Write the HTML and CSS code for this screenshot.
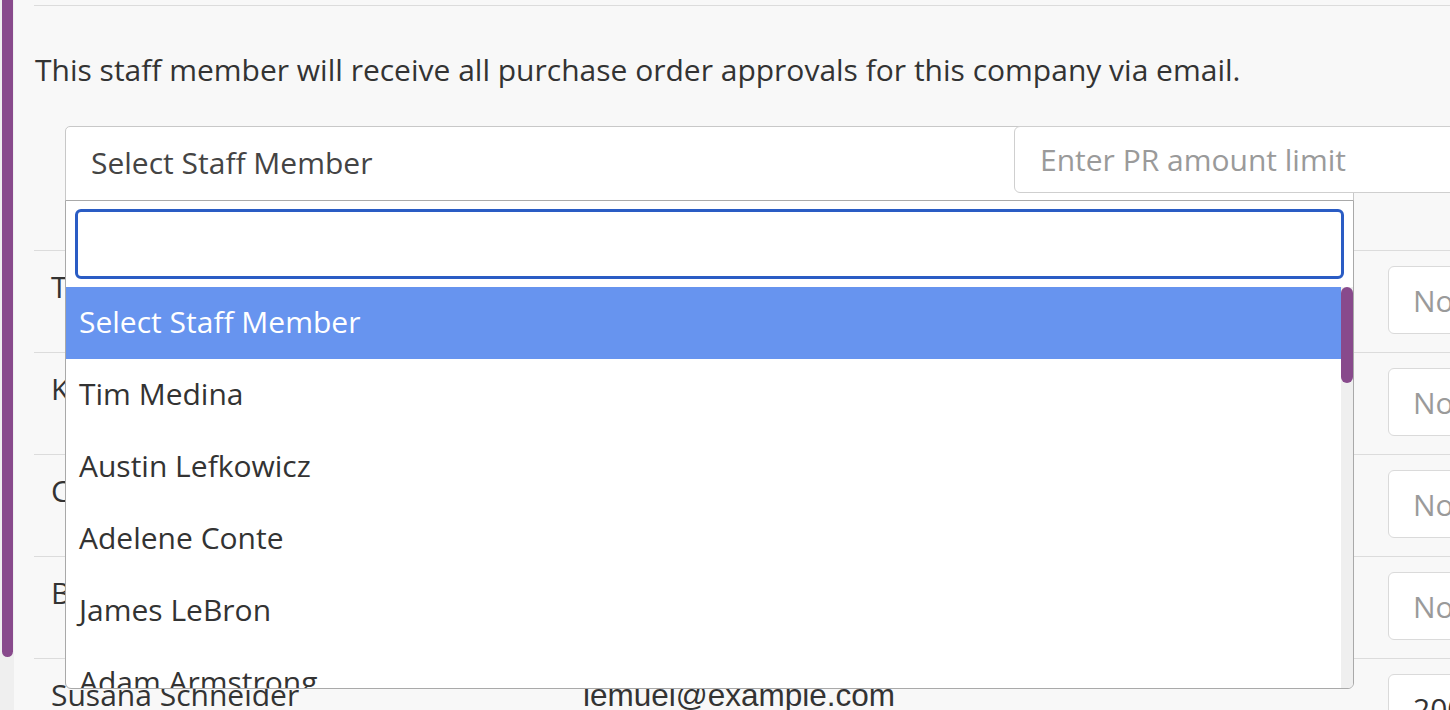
FILE: index.html
```html
<!DOCTYPE html>
<html lang="en">
<head>
<meta charset="utf-8">
<title>Purchase Order Approvals</title>
<link rel="stylesheet" href="styles.css">
</head>
<body>
<div class="page">
  <aside class="page-scroll"><div class="page-thumb"></div></aside>
  <main class="content">
    <hr class="rule">
    <p class="lead">This staff member will receive all purchase order approvals for this company via email.</p>

    <div class="form-row">
      <div class="select-wrap">
        <div class="select-box">Select Staff Member</div>
        <div class="dropdown">
          <div class="search-wrap"><input class="search" type="text" aria-label="Search staff"></div>
          <div class="results">
            <ul class="options">
              <li class="option active">Select Staff Member</li>
              <li class="option">Tim Medina</li>
              <li class="option">Austin Lefkowicz</li>
              <li class="option">Adelene Conte</li>
              <li class="option">James LeBron</li>
              <li class="option">Adam Armstrong</li>
            </ul>
            <div class="results-track"><div class="results-thumb"></div></div>
          </div>
        </div>
      </div>
      <input class="limit" type="text" placeholder="Enter PR amount limit">
    </div>

    <div class="table">
      <div class="row">
        <div class="cell name">Tim Medina</div>
        <div class="cell email">tim@example.com</div>
        <div class="cell amount"><input class="amount-input" type="text" placeholder="None"></div>
      </div>
      <div class="row">
        <div class="cell name">Kelly Moran</div>
        <div class="cell email">kelly@example.com</div>
        <div class="cell amount"><input class="amount-input" type="text" placeholder="None"></div>
      </div>
      <div class="row">
        <div class="cell name">Carla Diaz</div>
        <div class="cell email">carla@example.com</div>
        <div class="cell amount"><input class="amount-input" type="text" placeholder="None"></div>
      </div>
      <div class="row">
        <div class="cell name">Brian Walsh</div>
        <div class="cell email">brian@example.com</div>
        <div class="cell amount"><input class="amount-input" type="text" placeholder="None"></div>
      </div>
      <div class="row">
        <div class="cell name">Susana Schneider</div>
        <div class="cell email">lemuel@example.com</div>
        <div class="cell amount"><input class="amount-input" type="text" value="2000"></div>
      </div>
    </div>
  </main>
</div>
</body>
</html>
```

FILE: styles.css
```css
* { box-sizing: border-box; }

html, body {
  margin: 0;
  padding: 0;
  height: 100%;
  overflow: hidden;
}

body {
  background: #f8f8f8;
  color: #333;
  font-family: "Open Sans", "Noto Sans", sans-serif;
  font-size: 30px;
}

.page {
  display: flex;
  width: 1700px;
  height: 710px;
}

.page-scroll {
  flex: 0 0 14px;
  background: #efefef;
  padding-left: 2px;
  padding-right: 1px;
}

.page-thumb {
  height: 657px;
  background: #884a8c;
  border-radius: 0 0 6px 6px;
}

.content {
  flex: 1;
  padding-left: 20px;
  padding-top: 5px;
}

.rule {
  margin: 0;
  border: 0;
  border-top: 1px solid #dcdcdc;
}

.lead {
  margin: 45px 0 0 1px;
  line-height: 38px;
  color: #333;
}

.form-row {
  display: flex;
  margin-top: 37px;
  margin-left: 31px;
  height: 74px;
}

.select-wrap {
  position: relative;
  flex: 0 0 1289px;
}

.select-box {
  height: 75px;
  border: 1px solid #c8c8c8;
  border-radius: 5px 5px 0 0;
  background: #fff;
  padding-left: 25px;
  line-height: 72px;
  color: #444;
}

.limit {
  position: relative;
  flex: 0 0 600px;
  margin-left: -340px;
  height: 67px;
  border: 1px solid #cfcfcf;
  border-radius: 6px;
  background: #fff;
  padding: 0 25px;
  font: inherit;
  color: #333;
  outline: none;
}

.limit::placeholder { color: #9a9a9a; }

.dropdown {
  position: absolute;
  z-index: 5;
  left: 0;
  top: 74px;
  width: 1289px;
  height: 489px;
  background: #fff;
  border: 1px solid #a9a9a9;
  border-radius: 0 0 6px 6px;
  display: flex;
  flex-direction: column;
  overflow: hidden;
}

.search-wrap {
  padding: 8px 9px 8px 9px;
}

.search {
  display: block;
  width: 100%;
  height: 70px;
  border: 3px solid #2a5cc4;
  border-radius: 6px;
  outline: none;
  background: #fff;
  font: inherit;
}

.results {
  flex: 1;
  display: flex;
  min-height: 0;
}

.options {
  flex: 1;
  list-style: none;
  margin: 0;
  padding: 0;
  overflow: hidden;
}

.option {
  height: 72px;
  line-height: 70px;
  padding-left: 13px;
  color: #333;
  white-space: nowrap;
}

.option.active {
  background: #6794ef;
  color: #fff;
}

.results-track {
  flex: 0 0 12px;
  background: #efefef;
}

.results-thumb {
  height: 96px;
  background: #884a8c;
  border-radius: 6px;
}

.table {
  margin-top: 50px;
}

.row {
  display: flex;
  height: 102px;
  border-top: 1px solid #dcdcdc;
}

.cell.name {
  flex: 0 0 549px;
  padding-left: 17px;
  padding-top: 17px;
  line-height: 38px;
  white-space: nowrap;
}

.cell.email {
  flex: 0 0 805px;
  padding-top: 17px;
  line-height: 38px;
  font-family: "Liberation Sans", Arial, sans-serif;
  font-size: 31.5px;
  color: #333;
}

.cell.amount {
  padding-top: 15px;
}

.amount-input {
  width: 300px;
  height: 68px;
  border: 1px solid #dadada;
  border-radius: 6px;
  background: #fff;
  padding: 0 24px;
  font: inherit;
  color: #333;
  outline: none;
}

.amount-input::placeholder { color: #9a9a9a; }
```
